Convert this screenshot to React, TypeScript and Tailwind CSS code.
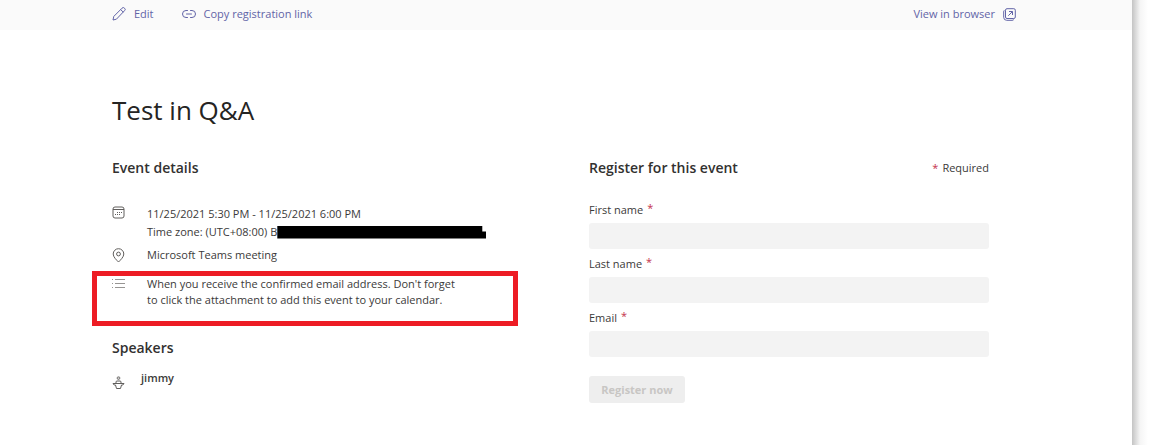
import React, { useState } from "react";

function PencilIcon() {
  return (
    <svg width="14" height="14" viewBox="0 0 14 14" fill="none" stroke="currentColor" strokeLinejoin="round">
      <path d="M1 13l.8-3.6L10 1.2a1.6 1.6 0 0 1 2.5 0 1.6 1.6 0 0 1 0 2.5l-8.1 8.500L1 13z" />
      <path d="M8.7 2.6l2.6 2.6" />
    </svg>
  );
}

function LinkIcon() {
  return (
    <svg width="14" height="10" viewBox="0 0 14 10" fill="none" stroke="currentColor" strokeLinecap="round">
      <path d="M5.5 1.5H4a3.5 3.5 0 0 0 0 7h1.5M8.5 1.5H10a3.5 3.5 0 0 1 0 7H8.5M4.5 5h5" />
    </svg>
  );
}

function OpenIcon() {
  return (
    <svg width="13" height="13" viewBox="0 0 13 13" fill="none" stroke="currentColor">
      <rect x="2.5" y=".7" width="9.8" height="9.8" rx="1.5" />
      <path d="M1.3 2.3C.8 2.8.7 3.3.7 4v5.3a3 3 0 0 0 3 3H9c.8 0 1.3-.2 1.8-.7" />
      <path d="M5.3 7.7l4-4M6 3.5h3.5V7" />
    </svg>
  );
}

function CalendarIcon() {
  return (
    <svg width="13" height="13" viewBox="0 0 13 13" fill="none" stroke="currentColor">
      <rect x="1" y="1" width="11" height="11" rx="2" />
      <path d="M1 3.5h11" />
      <path d="M5 6.5h1M7 6.5h1M9 6.5h1M3 8.5h1M5 8.5h1M7 8.5h1" />
    </svg>
  );
}

function PinIcon() {
  return (
    <svg width="13" height="15" viewBox="0 0 13 15" fill="none" stroke="currentColor">
      <path d="M6.5 14C4.5 12 1.2 9 1.2 6a5.3 5.3 0 0 1 10.6 0c0 3-3.3 6-5.3 8z" />
      <circle cx="6.5" cy="6" r="1.9" />
    </svg>
  );
}

function ListIcon() {
  return (
    <svg width="13" height="11" viewBox="0 0 13 11" fill="none" stroke="currentColor">
      <path d="M0 1.5h1M3 1.5h10M0 5.5h1M3 5.5h10M0 9.5h1M3 9.5h10" />
    </svg>
  );
}

function SpeakerIcon() {
  return (
    <svg width="13" height="14" viewBox="0 0 13 14" fill="none" stroke="currentColor">
      <rect x="5.3" y="1" width="2.4" height="2.2" rx=".6" />
      <path d="M4 7V6c0-.8.5-1 1-1h3c.5 0 1 .2 1 1v1" />
      <path d="M1 7.5h11L10.8 9H9.5l-1 3.5h-4L3.5 9H2.2L1 7.5" />
    </svg>
  );
}

const fields = [
  { id: "firstName", label: "First name", type: "text" },
  { id: "lastName", label: "Last name", type: "text" },
  { id: "email", label: "Email", type: "email" },
];

export default function App() {
  const [values, setValues] = useState<Record<string, string>>({});
  const complete = fields.every((field) => values[field.id]);

  return (
    <div className="flex min-h-screen bg-white font-['Open_Sans','Noto_Sans',sans-serif] text-[11px] leading-4 text-[#3b3a39]">
      <div className="flex-1">
        <header className="flex h-[30px] items-center justify-between bg-[#fafafa] pl-28 pr-[116px] pb-0.5 text-[#6264a7]">
          <div className="flex items-center gap-7">
            <button type="button" className="flex items-center gap-2">
              <PencilIcon />
              Edit
            </button>
            <button type="button" className="flex items-center gap-2">
              <LinkIcon />
              Copy registration link
            </button>
          </div>
          <a href="#" className="flex items-center gap-2">
            View in browser
            <OpenIcon />
          </a>
        </header>

        <main className="pl-28 pr-[143px] pt-16">
          <h1 className="text-[26px] leading-8 font-medium text-[#252423]">Test in Q&amp;A</h1>

          <div className="mt-8 grid grid-cols-[1fr_400px]">
            <section>
              <h2 className="text-sm leading-5 font-semibold text-[#323130]">Event details</h2>
              <div className="mt-[27px] flex gap-[22px]">
                <div className="pt-px text-[#605e5c]">
                  <CalendarIcon />
                </div>
                <div className="leading-[18px]">
                  <p>11/25/2021 5:30 PM - 11/25/2021 6:00 PM</p>
                  <p className="flex items-center">
                    Time zone: (UTC+08:00) B
                    <span className="h-[13px] w-[209px] bg-black [clip-path:polygon(0_0,205px_0,205px_6px,100%_6px,100%_100%,0_100%)]" />
                  </p>
                </div>
              </div>
              <div className="mt-1.5 flex items-center gap-[22px]">
                <div className="text-[#605e5c]">
                  <PinIcon />
                </div>
                <p>Microsoft Teams meeting</p>
              </div>
              <div className="-ml-5 mt-2 flex h-[55px] w-[426px] gap-[22px] border-5 border-[#ed1c24] pl-[15px]">
                <div className="pt-0.5 text-[#979593]">
                  <ListIcon />
                </div>
                <p>
                  When you receive the confirmed email address. Don't forget
                  <br />
                  to click the attachment to add this event to your calendar.
                </p>
              </div>

              <h2 className="mt-3 text-sm leading-5 font-semibold text-[#323130]">Speakers</h2>
              <div className="mt-3 flex gap-4">
                <div className="pt-1.5 text-[#605e5c]">
                  <SpeakerIcon />
                </div>
                <p className="font-semibold">jimmy</p>
              </div>
            </section>

            <form onSubmit={(e) => e.preventDefault()}>
              <div className="flex items-center justify-between">
                <h2 className="text-sm leading-5 font-semibold text-[#323130]">Register for this event</h2>
                <p className="flex gap-1">
                  <span className="text-[#c4314b]">*</span>
                  Required
                </p>
              </div>
              <div className="mt-6 flex flex-col gap-[7px]">
                {fields.map((field) => (
                  <div key={field.id} className="flex flex-col gap-[5px]">
                    <label htmlFor={field.id} className="flex gap-1">
                      {field.label}
                      <span className="-mt-0.5 text-[#c4314b]">*</span>
                    </label>
                    <input
                      id={field.id}
                      type={field.type}
                      value={values[field.id] ?? ""}
                      onChange={(e) => setValues({ ...values, [field.id]: e.target.value })}
                      className="h-[26px] rounded-[3px] bg-[#f3f3f3] px-3 outline-none"
                      required
                    />
                  </div>
                ))}
              </div>
              <button
                type="submit"
                disabled={!complete}
                className="mt-[19px] h-[27px] w-24 rounded-[3px] bg-[#6264a7] font-bold text-white disabled:bg-[#eeeeee] disabled:text-[#c8c6c4]"
              >
                Register now
              </button>
            </form>
          </div>
        </main>
      </div>
      <div className="w-8 bg-linear-to-r from-[#c4c4c4] via-[#f5f5f5] via-25% to-white to-50%" />
    </div>
  );
}
